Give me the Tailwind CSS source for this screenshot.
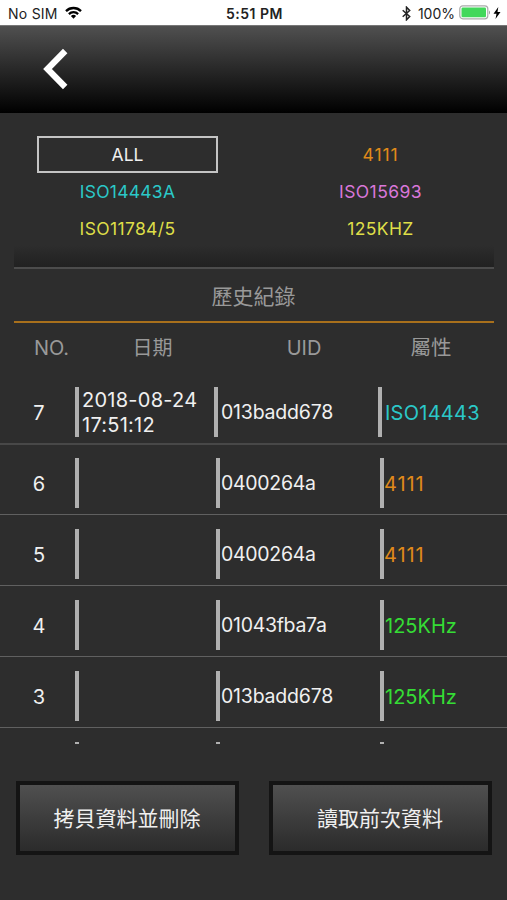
<!DOCTYPE html>
<html lang="zh-Hant">
<head>
<meta charset="utf-8">
<title>歷史紀錄</title>
<script src="https://cdn.jsdelivr.net/npm/@tailwindcss/browser@4"></script>
</head>
<body class="bg-[#2d2d2d]">
<div class="flex h-[900px] w-[507px] flex-col overflow-hidden bg-[#2d2d2d] font-['Inter','Noto_Sans_CJK_TC',sans-serif] text-[#f0f0f0]">
  <div class="grid h-[25px] shrink-0 grid-cols-[1fr_auto_1fr] items-center bg-white pt-[2px] pr-[6px] pl-[8px] text-[14px] leading-[22px] text-[#222]">
    <div class="flex items-center gap-[7px]">
      <span class="tracking-[0.25px]">No SIM</span>
      <svg class="mb-[2px] h-[13px] w-[17px]" viewBox="0 0 17 13" fill="none" stroke="#000" stroke-width="2.3"><path d="M1 5.1a10.6 10.6 0 0 1 15 0"/><path d="M3.9 8.1a6.5 6.5 0 0 1 9.2 0"/><path d="M5.9 10a3.7 3.7 0 0 1 5.2 0L8.500 12.700z" fill="#000" stroke="none"/></svg>
    </div>
    <span class="text-[14px] font-semibold tracking-[0.500px]">5:51 PM</span>
    <div class="flex items-center justify-end">
      <svg class="mr-[7px] h-[15px] w-[9px]" viewBox="0 0 9 15" fill="none" stroke="#222" stroke-width="1.500"><path d="M.7 4.200l7 6.300-3.200 3.300V1.200l3.200 3.300-7 6.300"/></svg>
      <span class="mr-[4px]">100%</span>
      <svg class="mb-[2px] h-[15px] w-[31px]" viewBox="0 0 31 15"><rect x=".8" y=".8" width="28" height="13" rx="3" fill="#fff" stroke="#aaa" stroke-width="1.200"/><rect x="2.500" y="2.500" width="24.500" height="9.700" rx="1.300" fill="#42d85b"/><path d="M30 5.500v4q1-.6 1-2t-1-2z" fill="#999"/></svg>
      <svg class="mb-px ml-[3px] h-[12px] w-[8px]" viewBox="0 0 7 12"><path d="M4.800 0L0 6.700h3L2 12l5-7H4z" fill="#000"/></svg>
    </div>
  </div>
  <header class="flex h-[88px] shrink-0 items-center border-t border-[#777] bg-linear-to-b/srgb from-[#505050] to-black pl-[43px]">
    <svg class="mb-[2px] h-[42px] w-[26px]" viewBox="0 0 26 42" fill="none" stroke="#fff" stroke-width="6.200"><path d="M22.200 3L4.500 21l17.700 18"/></svg>
  </header>
  <section class="relative mx-[14px] h-[156px] w-[480px] shrink-0 border-b-2 border-[#4c4c4c]">
    <div class="absolute inset-x-0 bottom-0 h-[22px] bg-linear-to-b from-[#2d2d2d] to-[#212121]"></div>
    <div class="relative grid grid-cols-[181px_181px] gap-x-[72px] pt-[23px] pl-[23px] text-center text-[17.500px]">
      <div class="h-[37px] border-2 border-[#c4c4c4] leading-[34px]">ALL</div>
      <div class="h-[37px] leading-[38px] tracking-[0.900px] text-[#e08a1a]">4111</div>
      <div class="h-[37px] leading-[37px] tracking-[0.250px] text-[#2bc8c8]">ISO14443A</div>
      <div class="h-[37px] leading-[37px] tracking-[0.400px] text-[#d977d9]">ISO15693</div>
      <div class="h-[37px] leading-[37px] tracking-[0.350px] text-[#dede48]">ISO11784/5</div>
      <div class="h-[37px] leading-[37px] tracking-[0.350px] text-[#dede48]">125KHZ</div>
    </div>
  </section>
  <h1 class="mx-[14px] h-[54px] w-[480px] shrink-0 border-b-2 border-[#a8701c] pr-px text-center text-[21px] leading-[55px] text-[#999]">歷史紀錄</h1>
  <div class="flex h-[50px] shrink-0 text-center text-[20px] leading-[50px] text-[#999]">
    <span class="ml-[14px] w-[75px]">NO.</span>
    <span class="w-[127px]">日期</span>
    <span class="w-[176px]">UID</span>
    <span class="w-[78px] text-[20.500px]">屬性</span>
  </div>
  <div class="h-[371px] shrink-0 overflow-hidden text-[20px]">
    <div class="flex h-[72px] items-center border-b-2 border-[#484848] pt-[8px]">
      <span class="w-[75px] text-center"><span class="relative top-px pl-[3px]">7</span></span>
      <div class="flex h-[50px] w-[139px] items-center border-l-4 border-[#b0b0b0] pt-[2px] pl-[3px] leading-[25px] tracking-[0.250px]">2018-08-24<br>17:51:12</div>
      <div class="flex h-[50px] w-[164px] items-center border-l-4 border-[#b0b0b0] pt-px pl-[3px] text-[19.500px] tracking-[-0.200px]">013badd678</div>
      <div class="flex h-[50px] items-center border-l-4 border-[#b0b0b0] pt-[2px] pl-[3px] tracking-[0.250px] text-[#2bc8c8]">ISO14443</div>
    </div>
    <div class="flex h-[70px] items-center border-b border-[#606060] pt-[7px]">
      <span class="w-[75px] text-center"><span class="relative top-px pl-[3px]">6</span></span>
      <div class="h-[50px] w-[141px] border-l-4 border-[#b0b0b0]"></div>
      <div class="flex h-[50px] w-[164px] items-center border-l-4 border-[#b0b0b0] pt-px pl-[1px] text-[19.500px] tracking-[-0.300px]">0400264a</div>
      <div class="flex h-[50px] items-center border-l-4 border-[#b0b0b0] pt-[2px] tracking-[0.900px] text-[#e08a1a]">4111</div>
    </div>
    <div class="flex h-[71px] items-center border-b border-[#606060] pt-[8px]">
      <span class="w-[75px] text-center"><span class="relative top-px pl-[3px]">5</span></span>
      <div class="h-[50px] w-[141px] border-l-4 border-[#b0b0b0]"></div>
      <div class="flex h-[50px] w-[164px] items-center border-l-4 border-[#b0b0b0] pt-px pl-[1px] text-[19.500px] tracking-[-0.300px]">0400264a</div>
      <div class="flex h-[50px] items-center border-l-4 border-[#b0b0b0] pt-[2px] tracking-[0.900px] text-[#e08a1a]">4111</div>
    </div>
    <div class="flex h-[71px] items-center border-b border-[#606060] pt-[8px]">
      <span class="w-[75px] text-center"><span class="relative top-px pl-[3px]">4</span></span>
      <div class="h-[50px] w-[141px] border-l-4 border-[#b0b0b0]"></div>
      <div class="flex h-[50px] w-[164px] items-center border-l-4 border-[#b0b0b0] pt-px pl-[1px] text-[19.500px] tracking-[-0.300px]">01043fba7a</div>
      <div class="flex h-[50px] items-center border-l-4 border-[#b0b0b0] pt-[2px] pl-[1px] text-[#35dc35]">125KHz</div>
    </div>
    <div class="flex h-[71px] items-center border-b border-[#606060] pt-[8px]">
      <span class="w-[75px] text-center"><span class="relative top-px pl-[3px]">3</span></span>
      <div class="h-[50px] w-[141px] border-l-4 border-[#b0b0b0]"></div>
      <div class="flex h-[50px] w-[164px] items-center border-l-4 border-[#b0b0b0] pt-px pl-[1px] text-[19.500px] tracking-[-0.200px]">013badd678</div>
      <div class="flex h-[50px] items-center border-l-4 border-[#b0b0b0] pt-[2px] pl-[1px] text-[#35dc35]">125KHz</div>
    </div>
    <div class="flex h-[71px] pt-[14px] pl-[75px]">
      <div class="h-[50px] w-[141px] border-l-4 border-[#b0b0b0]"></div>
      <div class="h-[50px] w-[164px] border-l-4 border-[#b0b0b0]"></div>
      <div class="h-[50px] border-l-4 border-[#b0b0b0]"></div>
    </div>
  </div>
  <div class="mt-[37px] ml-[16px] flex shrink-0 gap-[30px] text-[21px]">
    <button class="h-[74px] w-[223px] border-4 border-[#141414] bg-linear-to-b from-[#505050] to-[#2b2b2b] pt-px pr-px">拷貝資料並刪除</button>
    <button class="h-[74px] w-[223px] border-4 border-[#141414] bg-linear-to-b from-[#505050] to-[#2b2b2b] pt-px pr-px">讀取前次資料</button>
  </div>
</div>
</body>
</html>
